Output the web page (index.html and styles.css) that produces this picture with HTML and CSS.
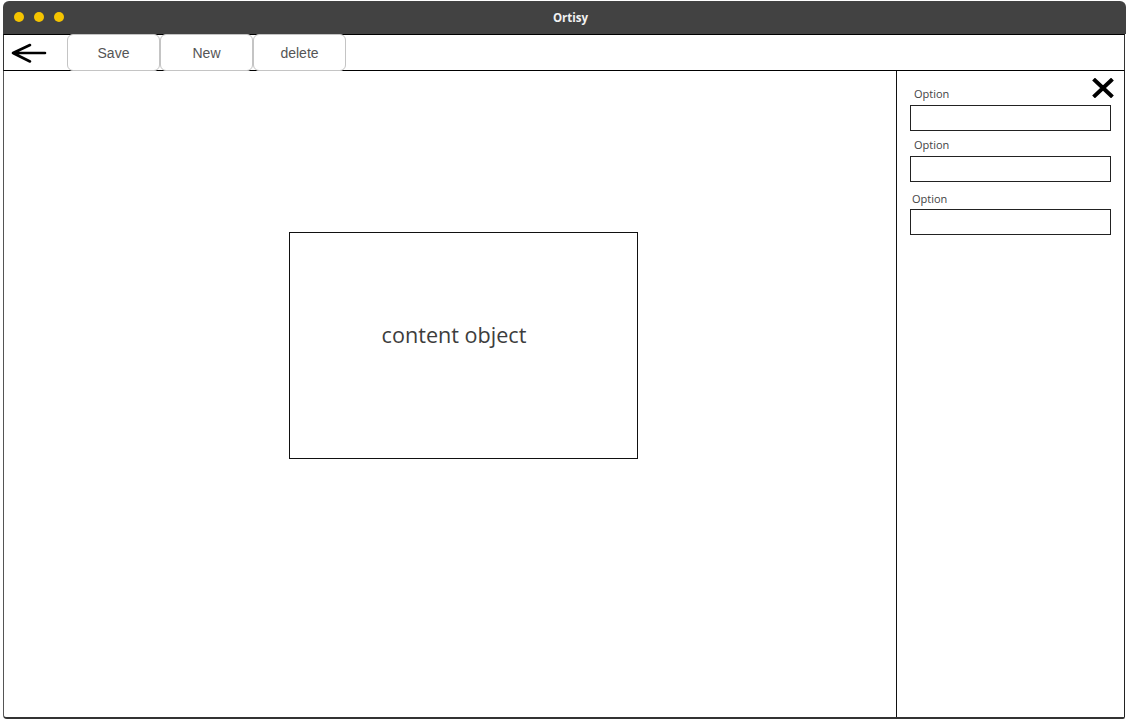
FILE: index.html
```html
<!DOCTYPE html>
<html lang="en">
<head>
<meta charset="utf-8">
<title>Ortisy</title>
<link rel="stylesheet" href="styles.css">
</head>
<body>
<div class="window">
  <header class="titlebar">
    <div class="dots">
      <span class="dot"></span><span class="dot"></span><span class="dot"></span>
    </div>
    <div class="title">Ortisy</div>
  </header>
  <nav class="toolbar">
    <button class="back" aria-label="Back">
      <svg width="36" height="22" viewBox="0 0 36 22">
        <path d="M2 11 H34 M2 11 L19 3 M2 11 L19 19.5" fill="none" stroke="#000" stroke-width="2.6" stroke-linecap="round" stroke-linejoin="round"/>
      </svg>
    </button>
    <button class="tbtn">Save</button>
    <button class="tbtn">New</button>
    <button class="tbtn">delete</button>
  </nav>
  <main class="main">
    <section class="canvas">
      <div class="object"><span class="object-label">content object</span></div>
    </section>
    <aside class="panel">
      <button class="close" aria-label="Close">
        <svg width="22" height="20" viewBox="0 0 22 20">
          <path d="M3 2.5 L19 17.5 M19 2.5 L3 17.5" fill="none" stroke="#000" stroke-width="4" stroke-linecap="square"/>
        </svg>
      </button>
      <div class="field field--first">
        <label class="label">Option</label>
        <input class="input" type="text">
      </div>
      <div class="field field--second">
        <label class="label">Option</label>
        <input class="input" type="text">
      </div>
      <div class="field field--third">
        <label class="label label--shift">Option</label>
        <input class="input" type="text">
      </div>
    </aside>
  </main>
</div>
</body>
</html>
```

FILE: styles.css
```css
* { box-sizing: border-box; }

html, body {
  margin: 0;
  padding: 0;
  background: #ffffff;
}

body {
  font-family: "Liberation Sans", Arial, sans-serif;
  padding: 1px 0 0 3px;
}

.window {
  width: 1122px;
  height: 718px;
  display: flex;
  flex-direction: column;
}

.titlebar {
  height: 33px;
  background: #424242;
  border-radius: 6px 6px 0 0;
  position: relative;
  display: flex;
  align-items: center;
  width: 1123px;
}

.dots {
  display: flex;
  gap: 10px;
  padding-left: 11px;
  margin-top: -2px;
}

.dot {
  width: 10px;
  height: 10px;
  border-radius: 50%;
  background: #f5c400;
}

.title {
  position: absolute;
  left: 0;
  right: 0;
  top: 9px;
  text-align: center;
  padding-left: 12px;
  color: #f2f2f2;
  font-family: "Open Sans", "Noto Sans", sans-serif;
  font-weight: 700;
  font-size: 11.5px;
  line-height: 16px;
}

.toolbar {
  height: 37px;
  border-top: 1px solid #000;
  border-bottom: 1px solid #000;
  border-left: 1px solid #333;
  border-right: 1px solid #333;
  display: flex;
  align-items: stretch;
}

.back {
  width: 63px;
  flex: none;
  padding: 0 0 0 7px;
  margin: 0;
  border: 0;
  background: transparent;
  display: flex;
  align-items: center;
}

.back svg { display: block; margin-top: 1px; }

.tbtn {
  width: 93px;
  flex: none;
  margin: -1px 0;
  height: 37px;
  background: #fff;
  border: 1px solid #c4c4c4;
  border-radius: 6px;
  color: #555;
  font-family: "Liberation Sans", Arial, sans-serif;
  font-size: 14px;
  padding: 0;
  position: relative;
}

.main {
  flex: 1;
  display: flex;
  border-left: 1px solid #555;
  border-right: 1px solid #222;
  border-bottom: 2px solid #333;
  border-radius: 0 0 2px 4px;
}

.canvas {
  width: 892px;
  padding: 161px 0 0 285px;
}

.object {
  width: 349px;
  height: 227px;
  border: 1px solid #111;
  display: flex;
  align-items: center;
  justify-content: center;
  padding: 0 19px 22px 0;
}

.object-label {
  font-family: "Open Sans", "Noto Sans", sans-serif;
  font-size: 21.6px;
  color: #3d3d3d;
}

.panel {
  flex: 1;
  border-left: 1px solid #111;
  position: relative;
  padding: 16px 0 0 13px;
}

.close {
  position: absolute;
  top: 7px;
  right: 10px;
  padding: 0;
  margin: 0;
  border: 0;
  background: transparent;
}

.close svg { display: block; }

.field {
  display: flex;
  flex-direction: column;
}

.field--first { margin-bottom: 7px; }
.field--second { margin-bottom: 10px; }

.label {
  font-family: "Open Sans", "Noto Sans", sans-serif;
  font-size: 11px;
  line-height: 14px;
  color: #444;
  padding-left: 4px;
  margin-bottom: 4px;
}

.label--shift {
  padding-left: 2px;
  margin-bottom: 3px;
}

.input {
  width: 201px;
  height: 26px;
  border: 1px solid #222;
  border-radius: 0;
  margin: 0;
  padding: 0 4px;
  background: #fff;
}
```
